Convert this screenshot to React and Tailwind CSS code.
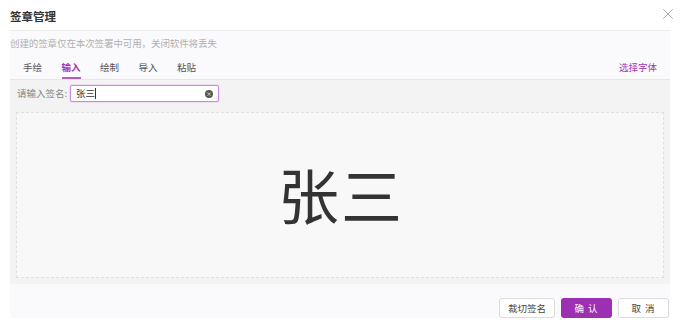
import { X } from 'lucide-react'

const tabs = ['手绘', '输入', '绘制', '导入', '粘贴']

export default function App() {
  return (
    <div className="w-[680px] h-[329px] bg-white overflow-hidden font-['Noto_Sans_CJK_SC','Noto_Sans',sans-serif]">
      {/* header */}
      <div className="h-[30px] flex items-center justify-between pl-[10px] pr-[3px] pt-[4px]">
        <span className="text-[11.5px] font-bold text-[#333]">签章管理</span>
        <X className="w-[18px] h-[18px] text-[#9a9a9a] -mt-[6px]" strokeWidth={1.1} />
      </div>

      <div className="ml-[10px] w-[660px] bg-[#fafafc] border-t border-[#ececec]">
        <div className="h-[24px] flex items-center text-[9.5px] text-[#b0b0b0] tracking-[-0.1px]">
          创建的签章仅在本次签署中可用，关闭软件将丢失
        </div>

        {/* tabs */}
        <div className="h-[25px] flex items-stretch justify-between border-b border-[#e6e6e6] pl-[13px] pr-[13px]">
          <div className="flex gap-[19.5px]">
            {tabs.map((t, i) => (
              <div
                key={t}
                className={
                  'relative flex items-center text-[9.5px] ' +
                  (i === 1 ? 'text-[#a035b5] font-bold' : 'text-[#555]')
                }
              >
                {t}
                {i === 1 && (
                  <span className="absolute left-0 right-0 bottom-0 h-[2px] bg-[#b45cc4]" />
                )}
              </div>
            ))}
          </div>
          <div className="flex items-center text-[9.5px] text-[#a035b5]">选择字体</div>
        </div>

        {/* content */}
        <div className="bg-[#f3f3f3] h-[204px] px-[6px] pt-[5px]">
          <div className="flex items-center h-[17px]">
            <span className="text-[9.5px] text-[#888] w-[54px] pl-[1px]">请输入签名:</span>
            <div className="w-[149px] h-[17px] bg-white border border-[#c98ad6] rounded-[2px] flex items-center justify-between pl-[5px] pr-[5px] shadow-[0_0_0_1px_#f0dcf4]">
              <span className="text-[9.5px] text-[#333] flex items-center">
                张三<span className="inline-block w-px h-[11px] bg-[#333]" />
              </span>
              <span className="w-[8px] h-[8px] rounded-full bg-[#555] flex items-center justify-center">
                <span className="text-white text-[6px] leading-none">×</span>
              </span>
            </div>
          </div>
          <div className="mt-[10px] h-[166px] bg-[#f8f8f8] border border-dashed border-[#e0e0e0] flex items-center justify-center">
            <span className="text-[61px] text-[#333] leading-none tracking-[2px] -mt-[4px] ml-[2px]">张三</span>
          </div>
        </div>

        {/* footer */}
        <div className="h-[34px] flex items-end justify-end gap-[6px] pr-[1px]">
          <button className="w-[56px] h-[20px] bg-white border border-[#dcdcdc] rounded-[3px] text-[9.5px] text-[#444] flex items-center justify-center">
            裁切签名
          </button>
          <button className="w-[51px] h-[20px] bg-[#9d2fb2] rounded-[3px] text-[9.5px] text-white flex items-center justify-center tracking-[1px]">
            确 认
          </button>
          <button className="w-[51px] h-[20px] bg-white border border-[#dcdcdc] rounded-[3px] text-[9.5px] text-[#444] flex items-center justify-center tracking-[1px]">
            取 消
          </button>
        </div>
      </div>
    </div>
  )
}
